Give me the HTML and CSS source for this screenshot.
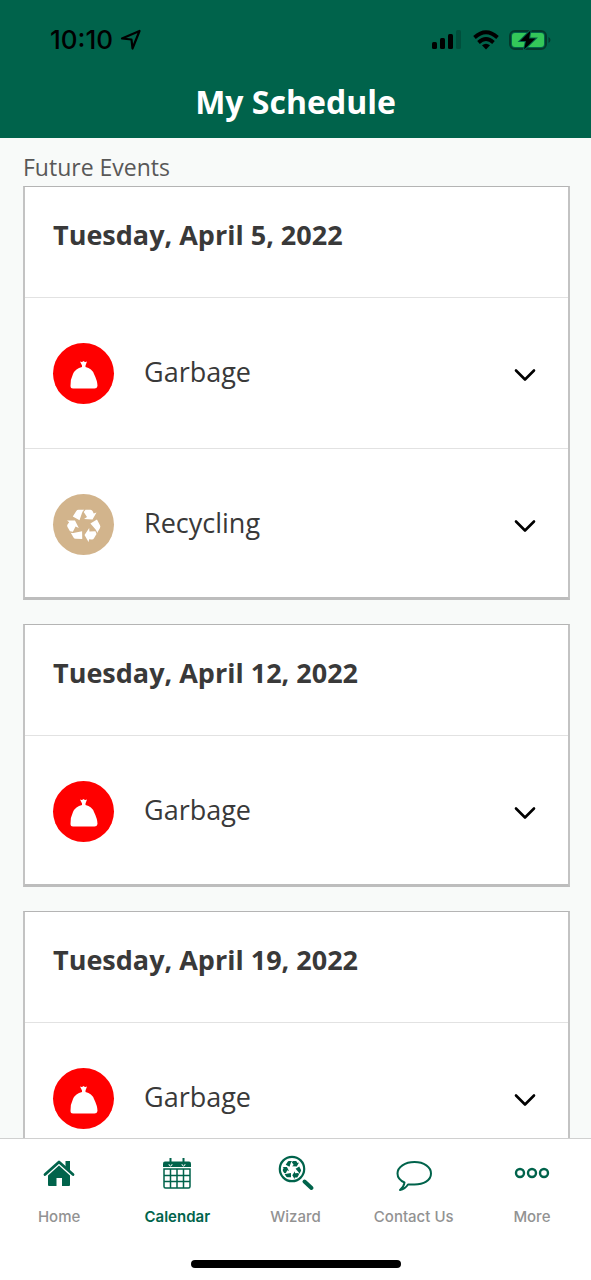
FILE: index.html
```html
<!DOCTYPE html>
<html lang="en">
<head>
<meta charset="utf-8">
<meta name="viewport" content="width=device-width, initial-scale=1">
<title>My Schedule</title>
<link rel="stylesheet" href="styles.css">
</head>
<body>
<svg class="defs" aria-hidden="true">
  <symbol id="bag" viewBox="0 0 60 60">
    <path d="M26 17.500Q28 18.500 29.500 17Q31 18.500 33 17.500L31.500 21.500V23Q38 24.500 40 30Q43.500 37 43.500 42Q43 44.500 40.500 44.500H19Q16.500 44.500 16.500 42Q16 36 19 30Q21.500 24.500 28 23V21.500Z" fill="#fff"/>
  </symbol>
  <symbol id="recycle-arm" viewBox="-17 -17 34 34" overflow="visible">
    <path d="M-11.200 -8.500L-7.700 -14Q-7 -15.300 -5.500 -15.300H.3Q-1.200 -14.500 -2 -12L-4.500 -4.800Z"/>
    <path d="M1.500 -15.300H6.500Q8 -15.300 8.700 -13.800L9.700 -11.500L12.500 -12.500L8.500 -5.500L0 -6L3 -8L-.3 -13Z"/>
  </symbol>
  <symbol id="recycle" viewBox="-17 -17 34 34">
    <use href="#recycle-arm" x="-17" y="-17" width="34" height="34"/>
    <use href="#recycle-arm" x="-17" y="-17" width="34" height="34" transform="rotate(120)"/>
    <use href="#recycle-arm" x="-17" y="-17" width="34" height="34" transform="rotate(240)"/>
  </symbol>
  <symbol id="chevron" viewBox="0 0 24 16">
    <path d="M3 3.500L12 12.500L21 3.500" fill="none" stroke="#000" stroke-width="2.600" stroke-linecap="round" stroke-linejoin="round"/>
  </symbol>
</svg>

<header class="header">
  <div class="status">
    <span class="clock">10:10</span>
    <svg class="location" viewBox="0 0 22 22"><path d="M2 9.500L19.500 2L12.500 19.500L11.500 10.500Z" fill="none" stroke="#000" stroke-width="2.200" stroke-linejoin="round"/></svg>
    <span class="spacer"></span>
    <svg class="signal" viewBox="0 0 30 20"><rect x="0" y="12" width="5" height="7" rx="1.500"/><rect x="8" y="8" width="5" height="11" rx="1.500"/><rect x="16" y="4" width="5" height="15" rx="1.500"/><rect x="24" y="0" width="5" height="19" rx="1.500" opacity=".2"/></svg>
    <svg class="wifi" viewBox="0 0 26 20"><g fill="none" stroke="#000" stroke-width="3.800"><path d="M1.500 7.500Q13 -3 24.500 7.500"/><path d="M5.500 12.500Q13 5.500 20.500 12.500"/></g><path d="M9 15.300Q13 12 17 15.300L13 19.500Z"/></svg>
    <svg class="battery" viewBox="0 0 42 22"><rect x="1" y="2" width="36" height="18" rx="5" fill="none" stroke="#04392c" stroke-width="2"/><path d="M39.500 8Q41.500 9 41.500 11T39.500 14Z" fill="#04392c"/><rect x="3" y="4" width="32" height="14" rx="3" fill="#34c759"/><path d="M21.500 1.500L11 12H17L15 20.500L26.500 9.500H20Z" stroke="#00634b" stroke-width="2" paint-order="stroke"/></svg>
  </div>
  <h1 class="title">My Schedule</h1>
</header>

<main class="content">
  <h2 class="section-title">Future Events</h2>
  <section class="card">
    <h3 class="date">Tuesday, April 5, 2022</h3>
    <button class="event" type="button"><span class="badge garbage"><svg class="bag"><use href="#bag"/></svg></span><span class="name">Garbage</span><svg class="chevron"><use href="#chevron"/></svg></button>
    <button class="event" type="button"><span class="badge recycling"><svg class="arrows"><use href="#recycle"/></svg></span><span class="name">Recycling</span><svg class="chevron"><use href="#chevron"/></svg></button>
  </section>
  <section class="card">
    <h3 class="date">Tuesday, April 12, 2022</h3>
    <button class="event" type="button"><span class="badge garbage"><svg class="bag"><use href="#bag"/></svg></span><span class="name">Garbage</span><svg class="chevron"><use href="#chevron"/></svg></button>
  </section>
  <section class="card">
    <h3 class="date">Tuesday, April 19, 2022</h3>
    <button class="event" type="button"><span class="badge garbage"><svg class="bag"><use href="#bag"/></svg></span><span class="name">Garbage</span><svg class="chevron"><use href="#chevron"/></svg></button>
  </section>
</main>

<footer class="footer">
  <nav class="tabs">
    <a class="tab" href="#home">
      <svg class="tab-icon" viewBox="0 0 40 40"><path d="M6 20.500L20 8L34 20.500" fill="none" stroke="#00634b" stroke-width="2.800" stroke-linecap="round" stroke-linejoin="round"/><path d="M26.500 7H31V17L26.500 13Z"/><path d="M20 11.500L31 21.500V31Q31 32 30 32H23V24H17.500V32H10Q9 32 9 31V21.500Z"/></svg>
      <span>Home</span>
    </a>
    <a class="tab active" href="#calendar">
      <svg class="tab-icon" viewBox="0 0 40 40"><path d="M8 7.500H32Q34 7.500 34 9.500V13H6V9.500Q6 7.500 8 7.500Z"/><path d="M7 15V32.500Q7 34 8.500 34H31.500Q33 34 33 32.500V15ZM7 21.500H33M7 27.500H33M13.500 15V34M20 15V34M26.500 15V34" fill="none" stroke="#00634b" stroke-width="1.500"/><path d="M12 10Q12 12 13.500 12T15 10M25 10Q25 12 26.500 12T28 10" fill="none" stroke="#fff" stroke-width="1"/><path d="M13.500 4V10.500M26.500 4V10.500" stroke="#00634b" stroke-width="2"/></svg>
      <span>Calendar</span>
    </a>
    <a class="tab" href="#wizard">
      <svg class="tab-icon" viewBox="0 0 40 40"><circle cx="16" cy="15" r="12.200" fill="none" stroke="#00634b" stroke-width="2.200"/><use href="#recycle" x="6.500" y="6" width="19" height="19"/><path d="M28.500 27.500L35.500 34" stroke="#00634b" stroke-width="4" stroke-linecap="round"/></svg>
      <span>Wizard</span>
    </a>
    <a class="tab" href="#contact">
      <svg class="tab-icon" viewBox="0 0 40 40"><path d="M20.500 8C30 8 37 13 37 19.500C37 26.500 29.500 30.500 20.500 30.500C18 30.500 16 30.500 14 30.500Q11 35 6 36Q10 32.500 10.500 28.500C6 26.500 3.500 23.500 3.500 19.500C3.500 13 11 8 20.500 8Z" fill="none" stroke="#00634b" stroke-width="2" stroke-linejoin="round"/></svg>
      <span>Contact Us</span>
    </a>
    <a class="tab" href="#more">
      <svg class="tab-icon" viewBox="0 0 40 40"><g fill="none" stroke="#00634b" stroke-width="2.400"><circle cx="8" cy="19" r="4"/><circle cx="20" cy="19" r="4"/><circle cx="32" cy="19" r="4"/></g></svg>
      <span>More</span>
    </a>
  </nav>
  <div class="home-bar"></div>
</footer>
</body>
</html>
```
FILE: styles.css
```css
* { box-sizing: border-box; }
body {
  margin: 0;
  height: 100vh;
  display: flex;
  flex-direction: column;
  background: #f8faf9;
  color: #393939;
  font-family: "Open Sans", sans-serif;
}
h1, h2, h3 { margin: 0; }
.defs { position: absolute; width: 0; height: 0; }

.header {
  flex: none;
  padding: 24px 40px 15px 50px;
  background: #00634b;
}
.status { display: flex; align-items: center; height: 32px; }
.clock { font: 500 26px/32px Inter, sans-serif; color: #000; }
.location { width: 22px; height: 22px; margin-left: 7px; }
.spacer { flex: 1; }
.signal { width: 30px; height: 20px; margin-right: 11px; }
.wifi { width: 26px; height: 20px; margin-right: 10px; }
.battery { width: 42px; height: 22px; }
.title {
  margin: 24px 0 0 -10px;
  color: #fff;
  font-size: 32px;
  line-height: 43px;
  font-weight: 700;
  text-align: center;
}

.content {
  flex: 1;
  min-height: 0;
  padding: 11px 21px 0 23px;
  overflow-y: auto;
  scrollbar-width: none;
}
.section-title {
  padding-bottom: 1px;
  color: #585858;
  font-size: 23px;
  line-height: 36px;
  font-weight: 400;
}
.card {
  margin-bottom: 24px;
  background: #fff;
  border: 2px solid #c3c3c3;
  border-top: 1px solid #b4b4b4;
  border-bottom: 3px solid #bdbdbd;
}
.date {
  padding: 30px 28px 44px;
  font-size: 27px;
  line-height: 36px;
  font-weight: 700;
}
.event {
  display: flex;
  align-items: center;
  width: 100%;
  padding: 45px 31px 44px 28px;
  border: 0;
  border-top: 1px solid #e2e2e2;
  background: #fff;
  color: inherit;
  font: 400 27px/40px "Open Sans", sans-serif;
  text-align: left;
}
.event:last-child { padding-bottom: 42px; }
.badge {
  display: flex;
  align-items: center;
  justify-content: center;
  width: 61px;
  height: 61px;
  margin-right: 30px;
  border-radius: 50%;
}
.garbage { background: #f00; }
.recycling { background: #d2b48c; }
.bag { width: 60px; height: 60px; }
.arrows { width: 34px; height: 34px; fill: #fff; }
.name { flex: 1; padding-bottom: 4px; }
.chevron { width: 24px; height: 16px; margin-top: 3px; }

.footer {
  flex: none;
  padding: 15px 0 12px;
  background: #fff;
  border-top: 1px solid #d0d0d0;
}
.tabs { display: flex; }
.tab {
  flex: 1;
  display: flex;
  flex-direction: column;
  align-items: center;
  gap: 13px;
  color: #929292;
  font: 500 15px/20px Inter, sans-serif;
  text-decoration: none;
  white-space: nowrap;
}
.active { color: #00634b; font-weight: 600; }
.tab-icon { width: 40px; height: 40px; fill: #00634b; }
.home-bar {
  width: 210px;
  height: 8px;
  margin: 33px auto 0;
  border-radius: 4px;
  background: #000;
}
```
